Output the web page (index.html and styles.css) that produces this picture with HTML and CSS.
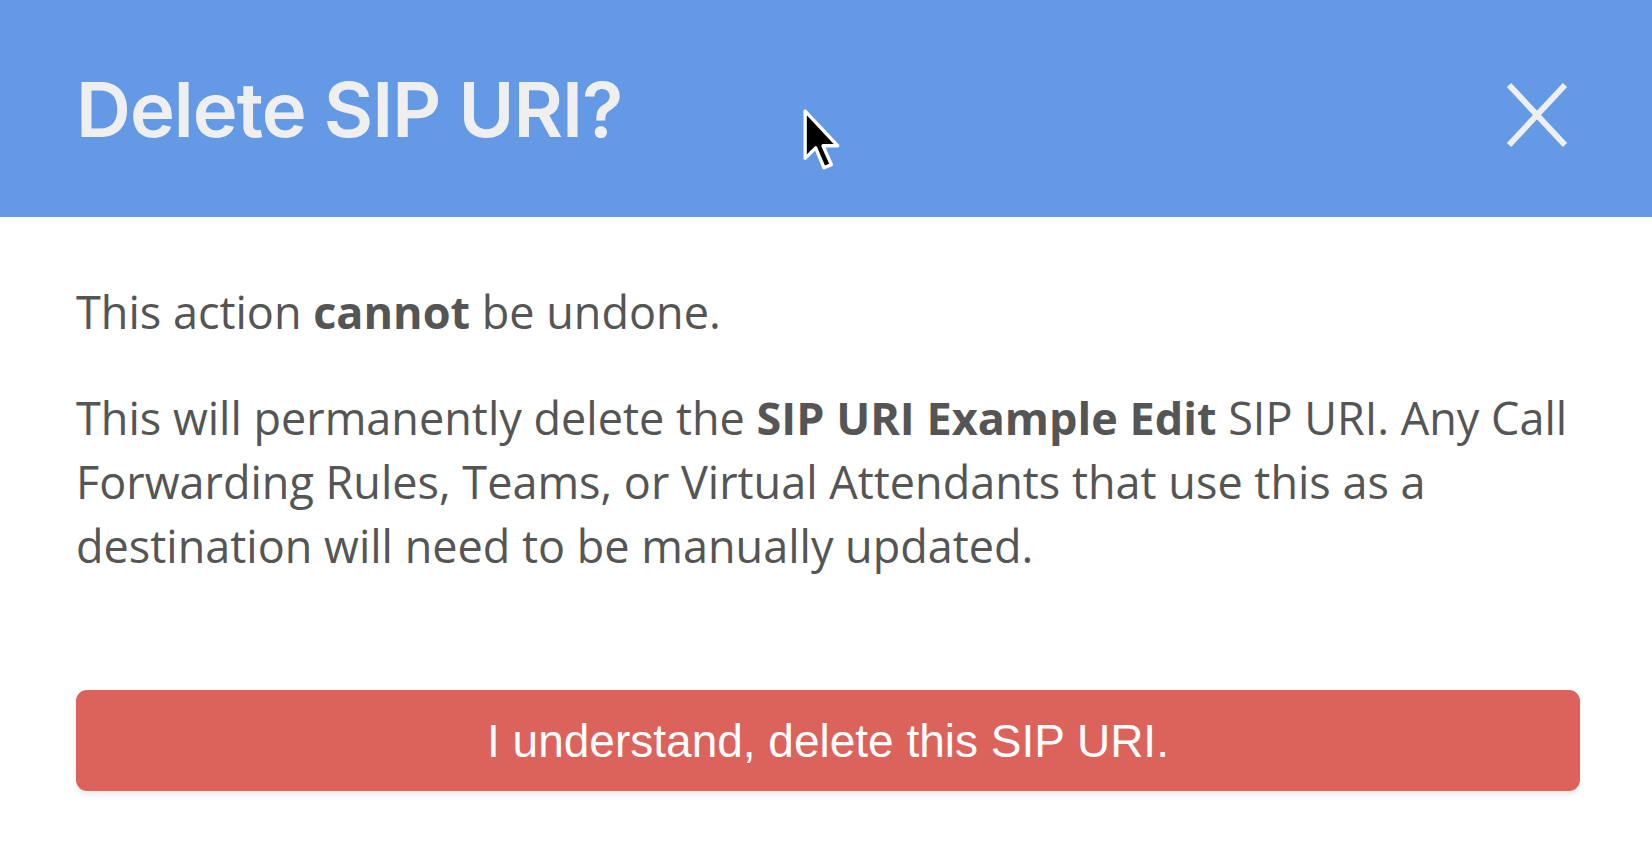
FILE: index.html
```html
<!DOCTYPE html>
<html lang="en">
<head>
    <meta charset="UTF-8">
    <meta name="viewport" content="width=device-width, initial-scale=1.0">
    <title>Delete SIP URI?</title>
    <link rel="stylesheet" href="styles.css">
</head>
<body>

    <div class="modal">
        <div class="modal-header">
            <h1>Delete SIP URI?</h1>
            <button class="close-btn" aria-label="Close">
                <svg width="62" height="66" viewBox="0 0 62 66">
                    <line x1="3" y1="3" x2="59" y2="63" stroke="#efefef" stroke-width="6"/>
                    <line x1="59" y1="3" x2="3" y2="63" stroke="#efefef" stroke-width="6"/>
                </svg>
            </button>
        </div>

        <div class="modal-body">
            <p>This action <strong>cannot</strong> be undone.</p>
            <p>This will permanently delete the <strong>SIP URI Example Edit</strong> SIP URI. Any Call Forwarding Rules, Teams, or Virtual Attendants that use this as a destination will need to be manually updated.</p>
            <button class="danger-btn">I understand, delete this SIP URI.</button>
        </div>
    </div>

    <!-- mouse pointer caught in the screenshot -->
    <svg class="cursor" width="42" height="65" viewBox="0 0 20 31">
        <path d="M1.5 1.5 L1.5 24 L6.5 19 L10.5 28.5 L14 27 L10 18 L17 18 Z" fill="#000" stroke="#fff" stroke-width="1.6" stroke-linejoin="round"/>
    </svg>

</body>
</html>
```

FILE: styles.css
```css
body {
    margin: 0;
    background-color: #fff;
    font-family: 'Open Sans', sans-serif;
    color: #555;
}
.modal {
    width: 1652px;
    min-height: 866px;
    background-color: #fff;
}
.modal-header {
    height: 217px;
    background-color: #6399e5;
    display: flex;
    align-items: center;
    justify-content: space-between;
    padding: 0 84px 0 76px;
    box-sizing: border-box;
}
.modal-header h1 {
    margin: 0;
    font-family: 'Inter', sans-serif;
    font-weight: 600;
    font-size: 76px;
    letter-spacing: -1px;
    color: #efefef;
}
.close-btn {
    background: none;
    border: none;
    padding: 0;
    margin-top: 16px;
    cursor: pointer;
    display: block;
}
.modal-body {
    padding: 63px 72px 0 76px;
}
.modal-body p {
    margin: 0 0 42px;
    font-size: 45px;
    line-height: 64px;
}
.modal-body strong {
    font-weight: 700;
}
.danger-btn {
    display: block;
    width: 100%;
    height: 101px;
    margin-top: 112px;
    border: none;
    border-radius: 11px;
    background-color: #dc635c;
    color: #fff;
    font-family: 'Liberation Sans', sans-serif;
    font-size: 46px;
    box-shadow: 0 4px 6px rgba(0, 0, 0, 0.08);
    cursor: pointer;
}
.cursor {
    position: absolute;
    left: 802px;
    top: 108px;
}
```
